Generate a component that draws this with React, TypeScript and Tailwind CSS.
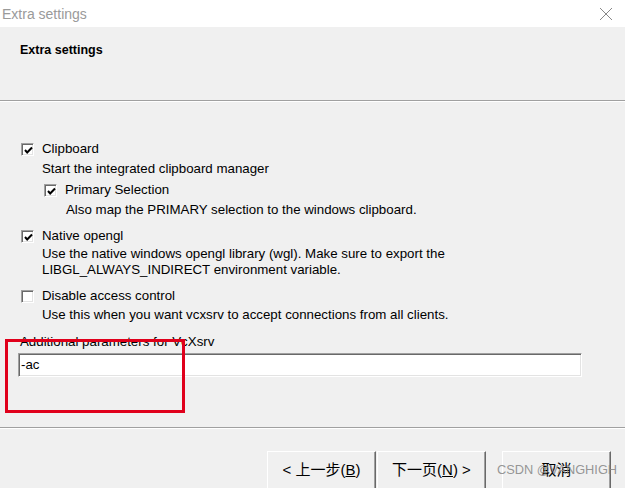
import React from "react";

const font = { fontFamily: '"Liberation Sans", "Noto Sans CJK SC", sans-serif' };

function Check({ checked }: { checked: boolean }) {
  return (
    <span className="relative inline-block w-[13px] h-[13px] shrink-0 bg-white border border-t-[#a0a0a0] border-l-[#a0a0a0] border-r-white border-b-white shadow-[inset_1px_1px_0_#696969,inset_-1px_-1px_0_#e3e3e3]">
      {checked && (
        <svg className="absolute left-[1px] top-[1px]" width="11" height="11" viewBox="0 0 11 11">
          <path d="M2 5 L4.2 7.5 L9 2.5" fill="none" stroke="#000" strokeWidth="2" />
        </svg>
      )}
    </span>
  );
}

function Option({
  checked,
  label,
  className,
  indent,
}: {
  checked: boolean;
  label: string;
  className?: string;
  indent: string;
}) {
  return (
    <div className={`flex items-center h-4 ${indent} ${className ?? ""}`}>
      <Check checked={checked} />
      <span className="ml-[8px]">{label}</span>
    </div>
  );
}

const btn =
  "w-[109px] h-[40px] bg-[#f0f0f0] border border-t-white border-l-white border-r-[#696969] border-b-[#696969] shadow-[inset_-1px_-1px_0_#a0a0a0] text-[15px] flex items-center justify-center pb-[3px]";

export default function App() {
  return (
    <div className="relative w-[625px] h-[488px] overflow-hidden bg-[#f0f0f0] text-[13.3px] leading-4 text-black" style={font}>
      <div className="flex items-center justify-between h-[27px] bg-white pl-[2px] pr-[12px]">
        <span className="text-[14px] text-[#9a9a9a]">Extra settings</span>
        <svg width="14" height="14" viewBox="0 0 14 14">
          <path d="M1 1 L13 13 M13 1 L1 13" stroke="#888" strokeWidth="1" />
        </svg>
      </div>

      <div className="h-[73px] pl-[20px] pt-[15px]">
        <h1 className="text-[12.5px] font-bold">Extra settings</h1>
      </div>
      <div className="border-t border-t-[#a0a0a0] border-b border-b-white" />

      <div className="pt-[39px] pl-[21px]">
        <Option checked label="Clipboard" indent="" />
        <p className="mt-[4px] pl-[21px]">Start the integrated clipboard manager</p>
        <Option checked label="Primary Selection" indent="pl-[23px]" className="mt-[5px]" />
        <p className="mt-[4px] pl-[45px]">Also map the PRIMARY selection to the windows clipboard.</p>

        <Option checked label="Native opengl" indent="" className="mt-[10px]" />
        <p className="mt-[2px] pl-[21px]">
          Use the native windows opengl library (wgl). Make sure to export the
          <br />
          LIBGL_ALWAYS_INDIRECT environment variable.
        </p>

        <Option checked={false} label="Disable access control" indent="" className="mt-[10px]" />
        <p className="mt-[3px] pl-[21px]">Use this when you want vcxsrv to accept connections from all clients.</p>

        <p className="mt-[11px] -ml-[1px]">Additional parameters for VcXsrv</p>
        <div className="mt-[3px] -ml-[3px] w-[564px] h-[24px] bg-white border border-t-[#a0a0a0] border-l-[#a0a0a0] border-r-white border-b-white shadow-[inset_1px_1px_0_#696969,inset_-1px_-1px_0_#e3e3e3] flex items-center pl-[2px]">
          -ac
        </div>
      </div>

      <div className="mt-[50px] border-t border-t-[#a0a0a0] border-b border-b-white" />

      <div className="flex pt-[22px] pl-[267px]">
        <button className={btn}>
          &lt; 上一步(<span className="underline">B</span>)
        </button>
        <button className={`ml-[1px] ${btn}`}>
          下一页(<span className="underline">N</span>) &gt;
        </button>
        <button className={`ml-[16px] ${btn}`}>取消</button>
      </div>

      <div className="absolute left-[5px] top-[339px] w-[180px] h-[74px] border-[3px] border-[#e0001b]" />
      <span className="absolute left-[497px] top-[462px] whitespace-nowrap text-[12.8px] leading-4 text-[#8a8a8a]/90">
        CSDN @VANGHIGH
      </span>
    </div>
  );
}
